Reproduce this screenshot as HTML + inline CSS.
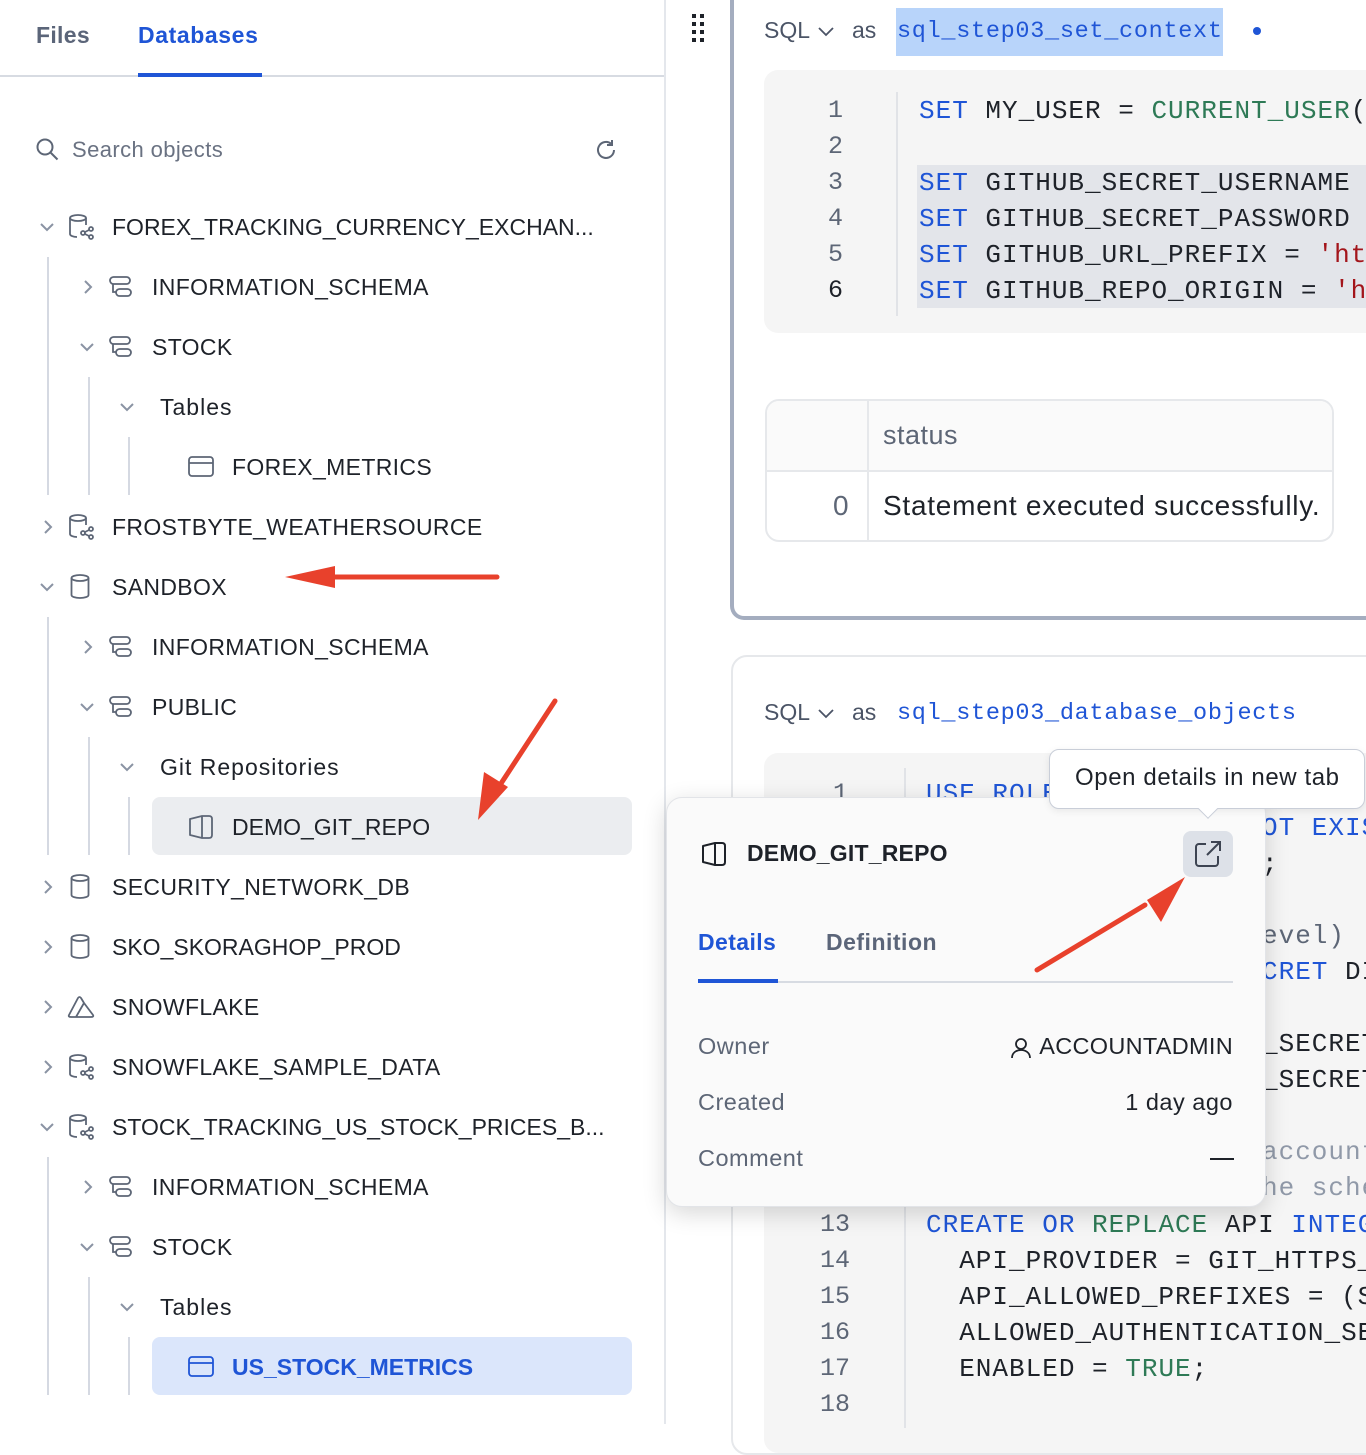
<!DOCTYPE html>
<html><head><meta charset="utf-8"><style>
*{margin:0;padding:0;box-sizing:border-box}
body{width:1366px;height:1424px;position:relative;overflow:hidden;background:#fff;font-family:"Liberation Sans",sans-serif;color:#1e2229}
.a{position:absolute;white-space:nowrap}
.t{font-size:23px;line-height:30px;color:#1e2229;letter-spacing:0.35px}
.m{font-family:"Liberation Mono",monospace;font-size:26px;letter-spacing:1px;line-height:36px;white-space:pre}
.kw{color:#1f55d6}.gr{color:#2e7a56}.rd{color:#a3151b}.cm{color:#9099a8}
.ln{font-family:"Liberation Mono",monospace;font-size:25px;line-height:36px;color:#5d6676;text-align:right;width:60px}
.p{font-size:23.5px;letter-spacing:0.5px}
svg{position:absolute;overflow:visible}
.vl{position:absolute;width:2px;background:#d5d9e2}
</style></head><body>
<!-- LEFT PANEL -->
<div class="a" style="left:36px;top:22px;font-size:23px;font-weight:bold;color:#5b6579;letter-spacing:0.3px">Files</div>
<div class="a" style="left:138px;top:22px;font-size:23px;font-weight:bold;color:#1f55d6;letter-spacing:0.6px">Databases</div>
<div class="a" style="left:0;top:75px;width:664px;height:2px;background:#d7dbe2"></div>
<div class="a" style="left:138px;top:73px;width:124px;height:4px;background:#1f55d6"></div>
<div class="a" style="left:664px;top:0;width:2px;height:1424px;background:#e4e7ec"></div>
<svg style="left:36px;top:138px" width="24" height="24" viewBox="0 0 24 24"><circle cx="9" cy="9" r="7.5" fill="none" stroke="#5d6676" stroke-width="2"/><path d="M14.5 14.5l7 7" stroke="#5d6676" stroke-width="2"/></svg>
<div class="a" style="left:72px;top:136px;font-size:22px;line-height:28px;color:#6a7282;letter-spacing:0.4px">Search objects</div>
<svg style="left:594px;top:138px" width="24" height="24" viewBox="0 0 24 24"><path d="M20 12a8 8 0 1 1-3-6.3" fill="none" stroke="#5d6676" stroke-width="2"/><path d="M18 2v5h-5" fill="none" stroke="#5d6676" stroke-width="2"/></svg>

<div class="vl" style="left:47px;top:257px;height:238px"></div>
<div class="vl" style="left:88px;top:377px;height:118px"></div>
<div class="vl" style="left:128px;top:437px;height:58px"></div>
<div class="vl" style="left:47px;top:617px;height:238px"></div>
<div class="vl" style="left:88px;top:737px;height:118px"></div>
<div class="vl" style="left:128px;top:797px;height:58px"></div>
<div class="vl" style="left:47px;top:1157px;height:238px"></div>
<div class="vl" style="left:88px;top:1277px;height:118px"></div>
<div class="vl" style="left:128px;top:1337px;height:58px"></div>

<div class="a" style="left:152px;top:797px;width:480px;height:58px;background:#ebedf0;border-radius:8px"></div>
<div class="a" style="left:152px;top:1337px;width:480px;height:58px;background:#dbe6fb;border-radius:8px"></div>

<svg style="left:40px;top:223px" width="14" height="8"><path d="M1 1l6 6 6-6" fill="none" stroke="#8a93a3" stroke-width="2"/></svg>
<svg style="left:84px;top:280px" width="8" height="14"><path d="M1 1l6 6-6 6" fill="none" stroke="#8a93a3" stroke-width="2"/></svg>
<svg style="left:80px;top:343px" width="14" height="8"><path d="M1 1l6 6 6-6" fill="none" stroke="#8a93a3" stroke-width="2"/></svg>
<svg style="left:120px;top:403px" width="14" height="8"><path d="M1 1l6 6 6-6" fill="none" stroke="#8a93a3" stroke-width="2"/></svg>
<svg style="left:44px;top:520px" width="8" height="14"><path d="M1 1l6 6-6 6" fill="none" stroke="#8a93a3" stroke-width="2"/></svg>
<svg style="left:40px;top:583px" width="14" height="8"><path d="M1 1l6 6 6-6" fill="none" stroke="#8a93a3" stroke-width="2"/></svg>
<svg style="left:84px;top:640px" width="8" height="14"><path d="M1 1l6 6-6 6" fill="none" stroke="#8a93a3" stroke-width="2"/></svg>
<svg style="left:80px;top:703px" width="14" height="8"><path d="M1 1l6 6 6-6" fill="none" stroke="#8a93a3" stroke-width="2"/></svg>
<svg style="left:120px;top:763px" width="14" height="8"><path d="M1 1l6 6 6-6" fill="none" stroke="#8a93a3" stroke-width="2"/></svg>
<svg style="left:44px;top:880px" width="8" height="14"><path d="M1 1l6 6-6 6" fill="none" stroke="#8a93a3" stroke-width="2"/></svg>
<svg style="left:44px;top:940px" width="8" height="14"><path d="M1 1l6 6-6 6" fill="none" stroke="#8a93a3" stroke-width="2"/></svg>
<svg style="left:44px;top:1000px" width="8" height="14"><path d="M1 1l6 6-6 6" fill="none" stroke="#8a93a3" stroke-width="2"/></svg>
<svg style="left:44px;top:1060px" width="8" height="14"><path d="M1 1l6 6-6 6" fill="none" stroke="#8a93a3" stroke-width="2"/></svg>
<svg style="left:40px;top:1123px" width="14" height="8"><path d="M1 1l6 6 6-6" fill="none" stroke="#8a93a3" stroke-width="2"/></svg>
<svg style="left:84px;top:1180px" width="8" height="14"><path d="M1 1l6 6-6 6" fill="none" stroke="#8a93a3" stroke-width="2"/></svg>
<svg style="left:80px;top:1243px" width="14" height="8"><path d="M1 1l6 6 6-6" fill="none" stroke="#8a93a3" stroke-width="2"/></svg>
<svg style="left:120px;top:1303px" width="14" height="8"><path d="M1 1l6 6 6-6" fill="none" stroke="#8a93a3" stroke-width="2"/></svg>

<svg style="left:69px;top:214px" width="26" height="26" viewBox="0 0 26 26" fill="none" stroke="#5d6676" stroke-width="1.8"><ellipse cx="9" cy="4" rx="8" ry="3"/><path d="M1 4v16c0 1.6 3 3 7 3M17 4v7"/><circle cx="14" cy="19" r="2"/><circle cx="22" cy="15" r="2"/><circle cx="22" cy="23" r="2"/><path d="M16 18l4-2M16 20l4 2"/></svg>
<svg style="left:69px;top:514px" width="26" height="26" viewBox="0 0 26 26" fill="none" stroke="#5d6676" stroke-width="1.8"><ellipse cx="9" cy="4" rx="8" ry="3"/><path d="M1 4v16c0 1.6 3 3 7 3M17 4v7"/><circle cx="14" cy="19" r="2"/><circle cx="22" cy="15" r="2"/><circle cx="22" cy="23" r="2"/><path d="M16 18l4-2M16 20l4 2"/></svg>
<svg style="left:69px;top:1054px" width="26" height="26" viewBox="0 0 26 26" fill="none" stroke="#5d6676" stroke-width="1.8"><ellipse cx="9" cy="4" rx="8" ry="3"/><path d="M1 4v16c0 1.6 3 3 7 3M17 4v7"/><circle cx="14" cy="19" r="2"/><circle cx="22" cy="15" r="2"/><circle cx="22" cy="23" r="2"/><path d="M16 18l4-2M16 20l4 2"/></svg>
<svg style="left:69px;top:1114px" width="26" height="26" viewBox="0 0 26 26" fill="none" stroke="#5d6676" stroke-width="1.8"><ellipse cx="9" cy="4" rx="8" ry="3"/><path d="M1 4v16c0 1.6 3 3 7 3M17 4v7"/><circle cx="14" cy="19" r="2"/><circle cx="22" cy="15" r="2"/><circle cx="22" cy="23" r="2"/><path d="M16 18l4-2M16 20l4 2"/></svg>
<svg style="left:70px;top:574px" width="20" height="26" viewBox="0 0 20 26" fill="none" stroke="#5d6676" stroke-width="1.8"><ellipse cx="10" cy="4" rx="8.5" ry="3"/><path d="M1.5 4v17c0 1.7 3.8 3 8.5 3s8.5-1.3 8.5-3V4"/></svg>
<svg style="left:70px;top:874px" width="20" height="26" viewBox="0 0 20 26" fill="none" stroke="#5d6676" stroke-width="1.8"><ellipse cx="10" cy="4" rx="8.5" ry="3"/><path d="M1.5 4v17c0 1.7 3.8 3 8.5 3s8.5-1.3 8.5-3V4"/></svg>
<svg style="left:70px;top:934px" width="20" height="26" viewBox="0 0 20 26" fill="none" stroke="#5d6676" stroke-width="1.8"><ellipse cx="10" cy="4" rx="8.5" ry="3"/><path d="M1.5 4v17c0 1.7 3.8 3 8.5 3s8.5-1.3 8.5-3V4"/></svg>
<svg style="left:67px;top:996px" width="28" height="22" viewBox="0 0 28 22" fill="none" stroke="#5d6676" stroke-width="1.8" stroke-linejoin="round"><path d="M11 2L2 19q-1 2 2 2h5l8-14-3-5q-1.5-2-3 0zM17 7l9 12q1 2-2 2H9"/></svg>
<svg style="left:109px;top:276px" width="24" height="22" viewBox="0 0 24 22" fill="none" stroke="#5d6676" stroke-width="1.8"><rect x="1" y="1" width="20" height="7" rx="3.5"/><rect x="7" y="13" width="15" height="7" rx="3.5"/><path d="M4 8v8h3"/></svg>
<svg style="left:109px;top:336px" width="24" height="22" viewBox="0 0 24 22" fill="none" stroke="#5d6676" stroke-width="1.8"><rect x="1" y="1" width="20" height="7" rx="3.5"/><rect x="7" y="13" width="15" height="7" rx="3.5"/><path d="M4 8v8h3"/></svg>
<svg style="left:109px;top:636px" width="24" height="22" viewBox="0 0 24 22" fill="none" stroke="#5d6676" stroke-width="1.8"><rect x="1" y="1" width="20" height="7" rx="3.5"/><rect x="7" y="13" width="15" height="7" rx="3.5"/><path d="M4 8v8h3"/></svg>
<svg style="left:109px;top:696px" width="24" height="22" viewBox="0 0 24 22" fill="none" stroke="#5d6676" stroke-width="1.8"><rect x="1" y="1" width="20" height="7" rx="3.5"/><rect x="7" y="13" width="15" height="7" rx="3.5"/><path d="M4 8v8h3"/></svg>
<svg style="left:109px;top:1176px" width="24" height="22" viewBox="0 0 24 22" fill="none" stroke="#5d6676" stroke-width="1.8"><rect x="1" y="1" width="20" height="7" rx="3.5"/><rect x="7" y="13" width="15" height="7" rx="3.5"/><path d="M4 8v8h3"/></svg>
<svg style="left:109px;top:1236px" width="24" height="22" viewBox="0 0 24 22" fill="none" stroke="#5d6676" stroke-width="1.8"><rect x="1" y="1" width="20" height="7" rx="3.5"/><rect x="7" y="13" width="15" height="7" rx="3.5"/><path d="M4 8v8h3"/></svg>
<svg style="left:188px;top:456px" width="26" height="22" viewBox="0 0 26 22" fill="none" stroke="#5d6676" stroke-width="1.8"><rect x="1" y="1" width="24" height="19" rx="3"/><path d="M1 7h24"/></svg>
<svg style="left:188px;top:1356px" width="26" height="22" viewBox="0 0 26 22" fill="none" stroke="#1f55d6" stroke-width="1.8"><rect x="1" y="1" width="24" height="19" rx="3"/><path d="M1 7h24"/></svg>
<svg style="left:189px;top:814px" width="24" height="26" viewBox="0 0 24 26" fill="none" stroke="#5d6676" stroke-width="1.8" stroke-linejoin="round"><path d="M1 5l12-3v22L1 21zM13 2h7q3 0 3 3v16q0 3-3 3h-7"/></svg>

<div class="a t" style="left:112px;top:212px;letter-spacing:0">FOREX_TRACKING_CURRENCY_EXCHAN...</div>
<div class="a t" style="left:152px;top:272px">INFORMATION_SCHEMA</div>
<div class="a t" style="left:152px;top:332px">STOCK</div>
<div class="a t" style="left:160px;top:392px;letter-spacing:1px">Tables</div>
<div class="a t" style="left:232px;top:452px">FOREX_METRICS</div>
<div class="a t" style="left:112px;top:512px">FROSTBYTE_WEATHERSOURCE</div>
<div class="a t" style="left:112px;top:572px">SANDBOX</div>
<div class="a t" style="left:152px;top:632px">INFORMATION_SCHEMA</div>
<div class="a t" style="left:152px;top:692px">PUBLIC</div>
<div class="a t" style="left:160px;top:752px;letter-spacing:1px">Git Repositories</div>
<div class="a t" style="left:232px;top:812px;letter-spacing:0">DEMO_GIT_REPO</div>
<div class="a t" style="left:112px;top:872px">SECURITY_NETWORK_DB</div>
<div class="a t" style="left:112px;top:932px;letter-spacing:0">SKO_SKORAGHOP_PROD</div>
<div class="a t" style="left:112px;top:992px">SNOWFLAKE</div>
<div class="a t" style="left:112px;top:1052px">SNOWFLAKE_SAMPLE_DATA</div>
<div class="a t" style="left:112px;top:1112px;letter-spacing:0">STOCK_TRACKING_US_STOCK_PRICES_B...</div>
<div class="a t" style="left:152px;top:1172px">INFORMATION_SCHEMA</div>
<div class="a t" style="left:152px;top:1232px">STOCK</div>
<div class="a t" style="left:160px;top:1292px;letter-spacing:1px">Tables</div>
<div class="a t" style="left:232px;top:1352px;color:#1f55d6;font-weight:bold;letter-spacing:0">US_STOCK_METRICS</div>

<svg style="left:692px;top:14px" width="12" height="28"><g fill="#1e2229"><rect x="0" y="0" width="4" height="4"/><rect x="8" y="0" width="4" height="4"/><rect x="0" y="8" width="4" height="4"/><rect x="8" y="8" width="4" height="4"/><rect x="0" y="16" width="4" height="4"/><rect x="8" y="16" width="4" height="4"/><rect x="0" y="24" width="4" height="4"/><rect x="8" y="24" width="4" height="4"/></g></svg>

<div class="a" style="left:730px;top:-20px;width:700px;height:640px;border-left:4px solid #a4adbf;border-bottom:4px solid #a4adbf;border-bottom-left-radius:14px"></div>
<div class="a" style="left:764px;top:17px;font-size:23px;color:#4b5466">SQL</div>
<svg style="left:818px;top:27px" width="16" height="9"><path d="M1 1l7 7 7-7" fill="none" stroke="#4b5466" stroke-width="1.8"/></svg>
<div class="a" style="left:852px;top:17px;font-size:23px;color:#4b5466">as</div>
<div class="a" style="left:896px;top:8px;width:327px;height:48px;background:#b8d4fa"></div>
<div class="a" style="left:897px;top:15px;font-family:'Liberation Mono',monospace;font-size:23.5px;letter-spacing:0.7px;color:#1f55d6;line-height:34px">sql_step03_set_context</div>
<div class="a" style="left:1253px;top:27px;width:8px;height:8px;border-radius:50%;background:#1f55d6"></div>

<div class="a" style="left:764px;top:70px;width:640px;height:263px;background:#f5f5f5;border-radius:14px"></div>
<div class="a" style="left:896px;top:92px;width:2px;height:224px;background:#e1e3e7"></div>
<div class="a" style="left:917px;top:165px;width:460px;height:143px;background:#e3e5ea"></div>
<div class="a ln" style="left:783px;top:93px">1<br>2<br>3<br>4<br>5<br><span style="color:#1e2229">6</span></div>
<div class="a m" style="left:919px;top:93px"><span class="kw">SET</span> MY_USER = <span class="gr">CURRENT_USER</span>(
 
<span class="kw">SET</span> GITHUB_SECRET_USERNAME
<span class="kw">SET</span> GITHUB_SECRET_PASSWORD
<span class="kw">SET</span> GITHUB_URL_PREFIX = <span class="rd">'ht</span>
<span class="kw">SET</span> GITHUB_REPO_ORIGIN = <span class="rd">'h</span></div>

<div class="a" style="left:765px;top:399px;width:569px;height:143px;border:2px solid #e6e8eb;border-radius:14px;overflow:hidden">
 <div style="position:absolute;left:0;top:0;width:100%;height:71px;background:#fafafa;border-bottom:2px solid #e6e8eb"></div>
 <div style="position:absolute;left:100px;top:0;width:2px;height:100%;background:#e6e8eb"></div>
 <div style="position:absolute;left:116px;top:19px;font-size:27px;color:#5d6676;letter-spacing:0.5px">status</div>
 <div style="position:absolute;left:66px;top:89px;font-size:28px;color:#5d6676">0</div>
 <div style="position:absolute;left:116px;top:89px;font-size:28px;letter-spacing:0.75px;color:#1e2229;white-space:nowrap">Statement executed successfully.</div>
</div>

<div class="a" style="left:731px;top:655px;width:700px;height:800px;border:2px solid #e6e8eb;border-radius:16px"></div>
<div class="a" style="left:764px;top:699px;font-size:23px;color:#4b5466">SQL</div>
<svg style="left:818px;top:709px" width="16" height="9"><path d="M1 1l7 7 7-7" fill="none" stroke="#4b5466" stroke-width="1.8"/></svg>
<div class="a" style="left:852px;top:699px;font-size:23px;color:#4b5466">as</div>
<div class="a" style="left:897px;top:697px;font-family:'Liberation Mono',monospace;font-size:23.5px;letter-spacing:0.7px;color:#1f55d6;line-height:34px">sql_step03_database_objects</div>
<div class="a" style="left:764px;top:753px;width:640px;height:700px;background:#f5f5f5;border-radius:14px"></div>
<div class="a" style="left:904px;top:768px;width:2px;height:660px;background:#e1e3e7"></div>
<div class="a ln" style="left:788px;top:776px">1</div>
<div class="a m" style="left:926px;top:776px"><span class="kw">USE ROLE</span></div>
<div class="a m" style="left:1262px;top:810px"><span class="kw">OT EXIS</span></div>
<div class="a m" style="left:1262px;top:846px">;</div>
<div class="a m" style="left:1262px;top:918px"><span style="color:#5d6676">evel)</span></div>
<div class="a m" style="left:1262px;top:954px"><span class="kw">CRET</span> DI</div>
<div class="a m" style="left:1262px;top:1026px">_SECRET</div>
<div class="a m" style="left:1262px;top:1062px">_SECRET</div>
<div class="a m" style="left:1262px;top:1134px"><span class="cm">account</span></div>
<div class="a m" style="left:1262px;top:1170px"><span class="cm">he sche</span></div>
<div class="a ln" style="left:790px;top:1207px">13<br>14<br>15<br>16<br>17<br>18</div>
<div class="a m" style="left:926px;top:1207px"><span class="kw">CREATE OR</span> <span class="gr">REPLACE</span> API <span class="kw">INTEG</span>
  API_PROVIDER = GIT_HTTPS_
  API_ALLOWED_PREFIXES = (S
  ALLOWED_AUTHENTICATION_SE
  ENABLED = <span class="gr">TRUE</span>;</div>

<!-- popup -->
<div class="a" style="left:666px;top:797px;width:600px;height:410px;background:#fafafa;border:1px solid #e2e4e8;border-radius:16px;box-shadow:0 6px 24px rgba(0,0,0,.16)"></div>
<svg style="left:702px;top:841px" width="24" height="26" viewBox="0 0 24 26" fill="none" stroke="#1e2229" stroke-width="2" stroke-linejoin="round"><path d="M1 5l12-3v22L1 21zM13 2h7q3 0 3 3v16q0 3-3 3h-7"/></svg>
<div class="a" style="left:747px;top:840px;font-size:23px;font-weight:bold;color:#1e2229;letter-spacing:0.2px">DEMO_GIT_REPO</div>
<div class="a" style="left:1183px;top:831px;width:50px;height:46px;background:#dde1e8;border-radius:8px"></div>
<svg style="left:1194px;top:840px" width="28" height="28" viewBox="0 0 28 28" fill="none" stroke="#3d4452" stroke-width="2"><path d="M12 4H5a3 3 0 0 0-3 3v16a3 3 0 0 0 3 3h16a3 3 0 0 0 3-3v-7M17 2h9v9M26 2L13 15"/></svg>
<div class="a" style="left:698px;top:929px;font-size:23px;font-weight:bold;color:#1f55d6;letter-spacing:0.4px">Details</div>
<div class="a" style="left:826px;top:929px;font-size:23px;font-weight:bold;color:#5b6579;letter-spacing:0.5px">Definition</div>
<div class="a" style="left:698px;top:981px;width:535px;height:2px;background:#d7dbe2"></div>
<div class="a" style="left:698px;top:979px;width:80px;height:4px;background:#1f55d6"></div>
<div class="a p" style="left:698px;top:1033px;color:#5d6676">Owner</div>
<div class="a p" style="left:698px;top:1089px;color:#5d6676">Created</div>
<div class="a p" style="left:698px;top:1145px;color:#5d6676">Comment</div>
<svg style="left:1010px;top:1037px" width="22" height="22" viewBox="0 0 22 22" fill="none" stroke="#1e2229" stroke-width="1.8"><circle cx="11" cy="7" r="5"/><path d="M2 21c0-5 4-8 9-8s9 3 9 8"/></svg>
<div class="a p" style="right:133px;top:1033px;color:#1e2229;letter-spacing:0.3px">ACCOUNTADMIN</div>
<div class="a p" style="right:133px;top:1089px;color:#1e2229">1 day ago</div>
<div class="a" style="left:1210px;top:1158px;width:24px;height:2px;background:#1e2229"></div>

<!-- tooltip -->
<div class="a" style="left:1049px;top:749px;width:316px;height:60px;background:#fff;border:1px solid #c9ced8;border-radius:10px;box-shadow:0 2px 8px rgba(0,0,0,.08)"></div>
<div class="a" style="left:1201px;top:802px;width:14px;height:14px;background:#fff;border-right:1px solid #c9ced8;border-bottom:1px solid #c9ced8;transform:rotate(45deg)"></div>
<div class="a" style="left:1075px;top:764px;font-size:24px;letter-spacing:0.6px;color:#1e2229">Open details in new tab</div>

<svg style="left:0;top:0" width="1366" height="1424"><g fill="#e8412c" stroke="#e8412c">
<path d="M497 577H330" stroke-width="5" stroke-linecap="round"/><path d="M285 577l50-11v22z" stroke="none"/>
<path d="M555 701L500 785" stroke-width="5" stroke-linecap="round"/><path d="M478 820l6-48 24 15z" stroke="none"/>
<path d="M1037 970L1145 905" stroke-width="5" stroke-linecap="round"/><path d="M1185 877l-24 45-14-22z" stroke="none"/>
</g></svg>
</body></html>
